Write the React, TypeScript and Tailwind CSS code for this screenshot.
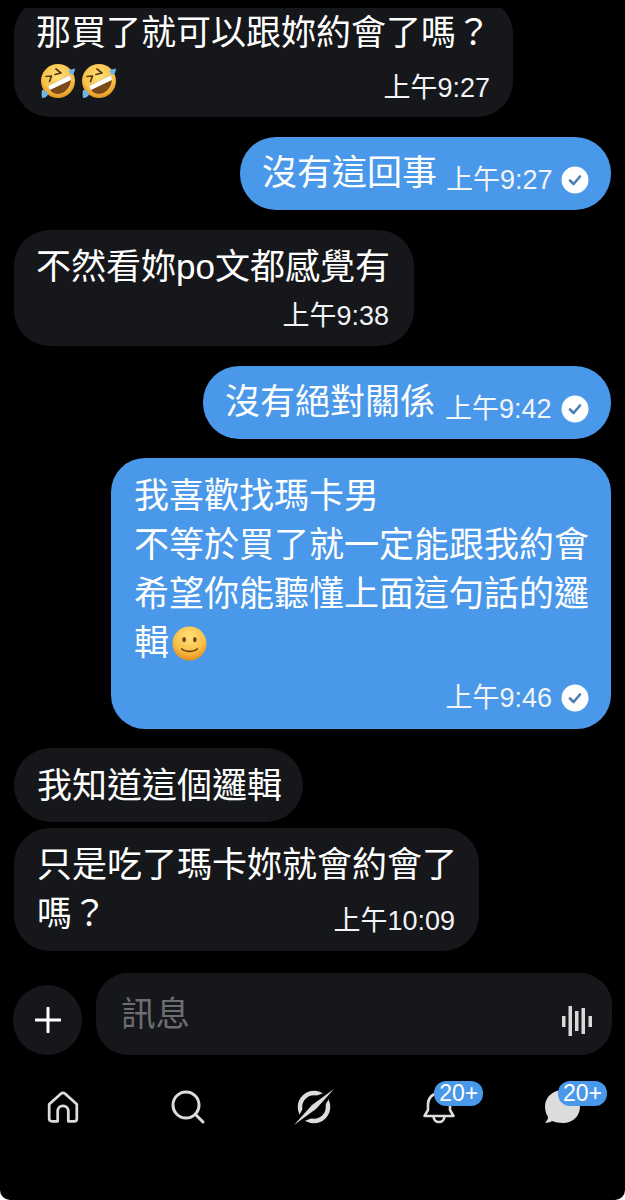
const cjk = "font-['Liberation_Sans','Noto_Sans_CJK_TC',sans-serif]";

function LaughEmoji() {
  return (
    <svg viewBox="0 0 36 36" className="h-[36px] w-[36px] shrink-0">
      <defs>
        <radialGradient id="laugh" cx="50%" cy="35%" r="65%">
          <stop offset="0%" stopColor="#fee27a" />
          <stop offset="70%" stopColor="#f8bf45" />
          <stop offset="100%" stopColor="#e0941f" />
        </radialGradient>
      </defs>
      <circle cx="18" cy="18" r="17" fill="url(#laugh)" />
      <path d="M8 23 L30 12 C33 21 27 29 20.5 30.5 C15 32 10 29 8 23Z" fill="#7a4a1a" />
      <path d="M8 23 L30 12 C30.7 14 31 15.5 30.9 17 L10 27 C9 25.8 8.4 24.5 8 23Z" fill="#fff" />
      <path d="M16 6 L21 10 L15 11.5" fill="none" stroke="#5a3510" strokeWidth="1.7" strokeLinecap="round" strokeLinejoin="round" />
      <path d="M6 13.5 L11.5 13 L9.5 18.5" fill="none" stroke="#5a3510" strokeWidth="1.7" strokeLinecap="round" strokeLinejoin="round" />
      <path d="M28.5 7.5 C30.5 6.5 33 6 35 5.5 C35 8 34 10.5 32.5 11.5 C30.5 12 29 10 28.5 7.5Z" fill="#6db6e8" />
      <path d="M2 27 C1.5 29.5 1.5 32 2 35 C4.5 35 7 34 8 31.5 C8 29.5 4.5 26.5 2 27Z" fill="#6db6e8" />
    </svg>
  );
}

function SmileEmoji() {
  return (
    <svg viewBox="0 0 36 36" className="ml-[3px] inline-block h-[35px] w-[35px] align-[-6px]">
      <defs>
        <radialGradient id="smile" cx="50%" cy="30%" r="70%">
          <stop offset="0%" stopColor="#fee27a" />
          <stop offset="65%" stopColor="#f8bf45" />
          <stop offset="100%" stopColor="#e58f20" />
        </radialGradient>
      </defs>
      <circle cx="18" cy="18" r="17.5" fill="url(#smile)" />
      <ellipse cx="12.5" cy="14" rx="1.9" ry="2.7" fill="#6e4210" />
      <ellipse cx="23.5" cy="14" rx="1.9" ry="2.7" fill="#6e4210" />
      <path d="M10 23.5 C13 27 23 27 26 23.5" fill="none" stroke="#6e4210" strokeWidth="1.6" strokeLinecap="round" />
    </svg>
  );
}

function Check() {
  return (
    <svg viewBox="0 0 28 28" className="h-[28px] w-[28px] shrink-0">
      <circle cx="14" cy="14" r="13.5" fill="#fff" />
      <path d="M9 14.5 L12.6 18 L19 10.5" fill="none" stroke="#4a7fb5" strokeWidth="2.6" strokeLinecap="round" strokeLinejoin="round" />
    </svg>
  );
}

function Time({ value }: { value: string }) {
  return <span className="h-[36px] whitespace-nowrap text-[27px] leading-[36px] text-[#f2f4f7]">{value}</span>;
}

function Badge({ className }: { className: string }) {
  return (
    <div className={`absolute flex h-[25px] w-[49px] items-center justify-center rounded-[12px] bg-[#4a98e9] text-[23px] leading-none text-white ${className}`}>
      20+
    </div>
  );
}

export default function App() {
  return (
    <div className={`h-[1200px] w-[625px] overflow-hidden bg-white text-white ${cjk}`}>
      <div className="flex h-full flex-col rounded-b-[10px] bg-black">
        {/* Messages */}
        <div className="mt-2 flex h-[946px] flex-col overflow-hidden text-[35px] leading-[49px]">
          <div className="-mt-[10px] ml-[14px] h-[119px] w-[499px] shrink-0 rounded-[36px] bg-[#16171a] pl-[22px] pr-[23px] pt-[10px]">
            <div className="whitespace-nowrap">那買了就可以跟妳約會了嗎？</div>
            <div className="flex items-start justify-between">
              <div className="mt-[6px] flex gap-[5px] pl-[4px]">
                <LaughEmoji />
                <LaughEmoji />
              </div>
              <div className="mt-[3px]"><Time value="上午9:27" /></div>
            </div>
          </div>

          <div className="mr-[14px] mt-[20px] flex h-[73px] w-[371px] shrink-0 items-center self-end rounded-[36px] bg-[#4a98e9] pl-[22px]">
            <span className="-mt-[2px] whitespace-nowrap">沒有這回事</span>
            <div className="ml-[9px] mt-[13px] flex items-center gap-[8px]"><Time value="上午9:27" /><Check /></div>
          </div>

          <div className="ml-[14px] mt-[20px] h-[116px] w-[400px] shrink-0 rounded-[36px] bg-[#16171a] pl-[22px] pr-[25px] pt-[12px]">
            <div className="whitespace-nowrap">不然看妳po文都感覺有</div>
            <div className="mt-[7px] flex justify-end"><Time value="上午9:38" /></div>
          </div>

          <div className="mr-[14px] mt-[20px] flex h-[73px] w-[408px] shrink-0 items-center self-end rounded-[36px] bg-[#4a98e9] pl-[22px]">
            <span className="-mt-[2px] whitespace-nowrap">沒有絕對關係</span>
            <div className="ml-[10px] mt-[12px] flex items-center gap-[9px]"><Time value="上午9:42" /><Check /></div>
          </div>

          <div className="mr-[14px] mt-[19px] h-[271px] w-[500px] shrink-0 self-end rounded-[34px] bg-[#4a98e9] pl-[23px] pr-[22px] pt-[13px]">
            <div className="whitespace-nowrap">我喜歡找瑪卡男</div>
            <div className="whitespace-nowrap">不等於買了就一定能跟我約會</div>
            <div className="whitespace-nowrap">希望你能聽懂上面這句話的邏</div>
            <div className="whitespace-nowrap">輯<SmileEmoji /></div>
            <div className="mt-[13px] flex items-center justify-end gap-[9px]"><Time value="上午9:46" /><Check /></div>
          </div>

          <div className="ml-[14px] mt-[19px] flex h-[74px] w-[289px] shrink-0 items-center rounded-[37px] bg-[#16171a] pl-[23px]">
            <span className="whitespace-nowrap">我知道這個邏輯</span>
          </div>

          <div className="ml-[14px] mt-[6px] h-[123px] w-[465px] shrink-0 rounded-[36px] bg-[#16171a] pl-[23px] pr-[24px] pt-[12px]">
            <div className="whitespace-nowrap">只是吃了瑪卡妳就會約會了</div>
            <div className="flex items-start justify-between">
              <span>嗎？</span>
              <div className="mt-[4px]"><Time value="上午10:09" /></div>
            </div>
          </div>
        </div>

        {/* Composer */}
        <div className="mt-[19px] flex items-end pl-[13px] pr-[13px]">
          <div className="flex h-[70px] w-[69px] shrink-0 items-center justify-center rounded-full bg-[#16171a]">
            <svg viewBox="0 0 26 26" className="h-[26px] w-[26px]" fill="none" stroke="#fff" strokeWidth="3" strokeLinecap="round">
              <path d="M13 1 V25 M1 13 H25" />
            </svg>
          </div>
          <div className="ml-[14px] flex h-[82px] flex-1 items-start justify-between rounded-[32px] bg-[#16171a] pl-[25px] pr-[20px]">
            <span className="mt-[17px] text-[34.5px] leading-[49px] text-[#6d6e71]">訊息</span>
            <svg viewBox="0 0 30 30" className="mt-[33px] h-[30px] w-[30px]" fill="#d9d9d9">
              <rect x="0" y="10" width="3.5" height="11" />
              <rect x="6.5" y="0" width="3.5" height="30" />
              <rect x="13" y="5" width="3.5" height="20" />
              <rect x="19.5" y="2" width="3.5" height="26" />
              <rect x="26.5" y="10" width="3.5" height="11" />
            </svg>
          </div>
        </div>

        {/* Tab bar */}
        <div className="mt-[27px] flex h-[50px] items-center justify-between pl-[46px] pr-[44px] text-[#dcdcdc]">
          <svg viewBox="0 0 32 32" className="h-[34px] w-[34px]" fill="none" stroke="currentColor" strokeWidth="2.6" strokeLinejoin="round">
            <path d="M3 13.5 L14 3.5 C15.2 2.5 16.8 2.5 18 3.5 L29 13.5 V27 C29 28.5 28 29.5 26.5 29.5 H21 V20 C21 17 19 15 16 15 C13 15 11 17 11 20 V29.5 H5.5 C4 29.5 3 28.5 3 27 Z" />
          </svg>
          <svg viewBox="0 0 34 34" className="ml-[2px] h-[34px] w-[34px]" fill="none" stroke="currentColor" strokeWidth="3">
            <circle cx="15" cy="15" r="13" />
            <path d="M24.5 24.5 L32 32" strokeLinecap="round" />
          </svg>
          <svg viewBox="0 0 40 46" className="h-[46px] w-[40px]">
            <circle cx="20" cy="23" r="14" fill="none" stroke="currentColor" strokeWidth="4.5" />
            <path d="M40 5 L26 31 L0 41 L14 15 Z" fill="#000" />
            <path d="M40 5 L22 25 L0 41 L18 21 Z" fill="currentColor" />
          </svg>
          <div className="relative h-[34px] w-[34px]">
            <svg viewBox="0 0 34 34" className="h-[34px] w-[34px]" fill="none" stroke="currentColor" strokeWidth="2.6" strokeLinejoin="round">
              <path d="M2.5 26 H31.5 L28 20 V14 C28 8 23 3 17 3 C11 3 6 8 6 14 V20 Z" />
              <path d="M11.5 26 C11.5 34 22.5 34 22.5 26" />
            </svg>
            <Badge className="-top-[9px] left-[12px]" />
          </div>
          <div className="relative h-[34px] w-[36px]">
            <svg viewBox="0 0 36 34" className="h-[34px] w-[36px]" fill="currentColor">
              <path d="M18 0 C28 0 35 7 35 16.5 C35 26 28 33 18 33 C14 33 10 32 7 31 C5 32.5 3 33 0 32.5 C2 31 3 29 3 27 C1 24 0 20 0 16.5 C0 7 8 0 18 0Z" />
            </svg>
            <Badge className="-top-[9px] left-[13px]" />
          </div>
        </div>
      </div>
    </div>
  );
}
